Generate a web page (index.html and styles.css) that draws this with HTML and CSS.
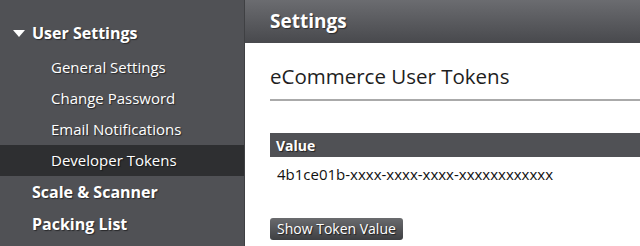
FILE: index.html
```html
<!DOCTYPE html>
<html lang="en">
<head>
<meta charset="UTF-8">
<title>Settings</title>
<link rel="stylesheet" href="styles.css">
</head>
<body>
    <div id="layout">
        <div id="sidebar">
            <div class="group open">
                <span class="caret"></span>User Settings
            </div>
            <div class="item">General Settings</div>
            <div class="item">Change Password</div>
            <div class="item">Email Notifications</div>
            <div class="item active">Developer Tokens</div>
            <div class="group">Scale &amp; Scanner</div>
            <div class="group">Packing List</div>
        </div>
        <div id="main">
            <div id="header">Settings</div>
            <div id="content">
                <h2 class="section-title">eCommerce User Tokens</h2>
                <table class="tokens">
                    <thead>
                        <tr><th>Value</th></tr>
                    </thead>
                    <tbody>
                        <tr><td>4b1ce01b-xxxx-xxxx-xxxx-xxxxxxxxxxxx</td></tr>
                    </tbody>
                </table>
                <button class="btn">Show Token Value</button>
            </div>
        </div>
    </div>
</body>
</html>
```

FILE: styles.css
```css
* {
    margin: 0;
    padding: 0;
    box-sizing: border-box;
}
html, body {
    width: 100%;
    height: 100%;
}
body {
    font-family: "Open Sans", sans-serif;
    background-color: #fff;
    overflow: hidden;
}

#layout {
    display: flex;
    height: 100%;
}

/* sidebar */
#sidebar {
    width: 244px;
    flex: none;
    background-color: #505155;
    padding-top: 17px;
    color: #fff;
    text-shadow: 1px 1px 1px rgba(0, 0, 0, 0.5);
}
#sidebar .group {
    height: 32px;
    line-height: 32px;
    padding-left: 32px;
    font-size: 16px;
    font-weight: bold;
    position: relative;
}
#sidebar .group.open {
    margin-bottom: 3px;
}
#sidebar .caret {
    position: absolute;
    left: 13px;
    top: 13px;
    width: 0;
    height: 0;
    border-left: 6px solid transparent;
    border-right: 6px solid transparent;
    border-top: 7px solid #fff;
}
#sidebar .item {
    height: 31px;
    line-height: 31px;
    padding-left: 51px;
    font-size: 15px;
}
#sidebar .item.active {
    background-color: #2e2f31;
}

/* main */
#main {
    flex: 1;
    min-width: 0;
    border-left: 1px solid #3f4043;
}
#header {
    height: 43px;
    line-height: 43px;
    padding-left: 25px;
    background: linear-gradient(#6b6c70, #48494d);
    color: #fff;
    font-size: 19px;
    font-weight: bold;
    text-shadow: 1px 1px 1px rgba(0, 0, 0, 0.5);
}
#content {
    padding: 17px 0 0 25px;
}
.section-title {
    font-size: 20.5px;
    font-weight: normal;
    color: #1e1e1e;
    line-height: 32px;
    padding-bottom: 7px;
    border-bottom: 2px solid #aaa;
    margin-bottom: 32px;
}
.tokens {
    width: 100%;
    border-collapse: collapse;
    margin-bottom: 26px;
}
.tokens th {
    background-color: #505155;
    color: #fff;
    text-align: left;
    font-size: 14px;
    font-weight: bold;
    height: 24px;
    padding: 0 6px;
    text-shadow: 1px 1px 1px rgba(0, 0, 0, 0.6);
}
.tokens td {
    font-size: 15px;
    color: #111;
    height: 34px;
    padding: 0 7px;
    vertical-align: middle;
}
.btn {
    font-family: "Open Sans", sans-serif;
    font-size: 14px;
    color: #fff;
    border: none;
    border-radius: 3px;
    height: 22px;
    padding: 0 7px;
    background: linear-gradient(#6a6b6e, #3e3f42);
    text-shadow: 1px 1px 1px rgba(0, 0, 0, 0.6);
}
```
